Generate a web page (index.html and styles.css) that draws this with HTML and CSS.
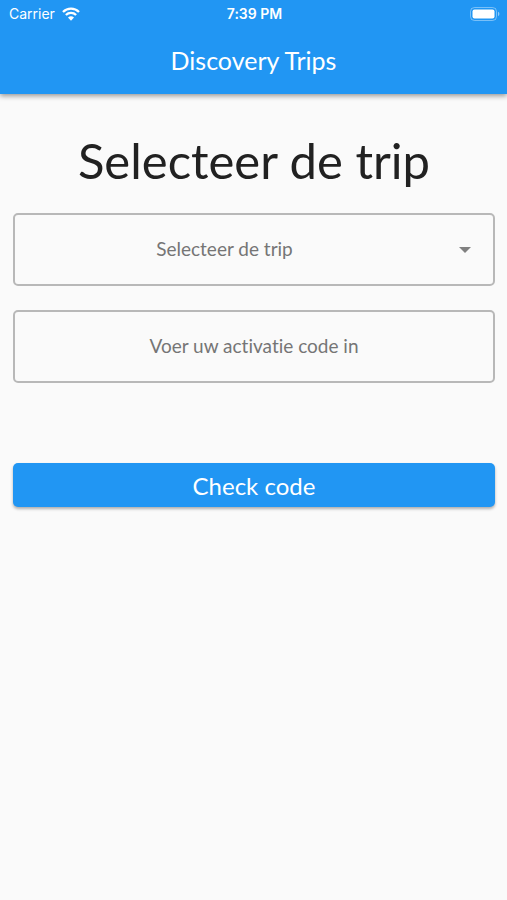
FILE: index.html
```html
<!DOCTYPE html>
<html lang="nl">
<head>
<meta charset="utf-8">
<meta name="viewport" content="width=device-width, initial-scale=1">
<title>Discovery Trips</title>
<link rel="stylesheet" href="styles.css">
</head>
<body>
<header class="app-bar">
  <div class="status">
    <div class="carrier">
      <span>Carrier</span>
      <svg class="wifi" viewBox="0 0 18 14" aria-hidden="true">
        <path d="M1 5a11.3 11.3 0 0 1 16 0M3.9 8a7.2 7.2 0 0 1 10.2 0" fill="none" stroke="currentColor" stroke-width="2.3"/>
        <path d="M9 13.8 6 10.6a4.3 4.3 0 0 1 6 0z" fill="currentColor"/>
      </svg>
    </div>
    <time class="clock">7:39 PM</time>
    <svg class="battery" viewBox="0 0 30 14" aria-hidden="true">
      <rect x="0.5" y="0.5" width="26" height="13" rx="4" fill="none" stroke="currentColor" opacity="0.4"/>
      <rect x="2.5" y="2.5" width="22" height="9" rx="2" fill="currentColor"/>
      <path d="M28 4.8a2.4 2.4 0 0 1 0 4.4z" fill="currentColor" opacity="0.5"/>
    </svg>
  </div>
  <div class="title">Discovery Trips</div>
</header>
<main class="content">
  <h1 class="heading">Selecteer de trip</h1>
  <form class="form">
    <div class="select-wrap">
      <select class="field trip" aria-label="Selecteer de trip">
        <option>Selecteer de trip</option>
      </select>
      <svg class="arrow" viewBox="0 0 12 6" aria-hidden="true"><path d="M0 0h12L6 6z" fill="currentColor"/></svg>
    </div>
    <input class="field" type="text" placeholder="Voer uw activatie code in" aria-label="Voer uw activatie code in">
    <button class="submit" type="button">Check code</button>
  </form>
</main>
</body>
</html>
```
FILE: styles.css
```css
* {
  box-sizing: border-box;
}

body {
  margin: 0;
  min-height: 100vh;
  background: #fafafa;
  color: #212121;
  font-family: Lato, "Liberation Sans", sans-serif;
  font-variant-ligatures: none;
}

.app-bar {
  background: #2196f3;
  color: #fff;
  box-shadow: 0 2px 5px rgba(0, 0, 0, 0.4);
}

.status {
  display: grid;
  grid-template-columns: 1fr auto 1fr;
  align-items: center;
  height: 28px;
  padding: 0 7px 0 9px;
  font-family: Inter, "Liberation Sans", sans-serif;
  font-size: 14px;
}

.carrier {
  display: flex;
  align-items: center;
  gap: 7px;
  line-height: 16px;
}

.wifi {
  width: 18px;
  height: 14px;
}

.clock {
  font-weight: 600;
  line-height: 16px;
}

.battery {
  justify-self: end;
  width: 30px;
  height: 14px;
}

.title {
  height: 66px;
  line-height: 64px;
  font-size: 25px;
  text-align: center;
}

.content {
  padding: 36px 12px 36px 13px;
}

.heading {
  margin: 0 0 23px;
  font-size: 49px;
  font-weight: 400;
  line-height: 60px;
  text-align: center;
}

.form {
  display: flex;
  flex-direction: column;
  gap: 24px;
}

.select-wrap {
  position: relative;
}

.field {
  display: block;
  width: 100%;
  height: 73px;
  padding: 0 16px 2px;
  border: 2px solid #b8b8b8;
  border-radius: 5px;
  background: transparent;
  color: #757575;
  font-family: inherit;
  font-size: 19px;
  font-variant-ligatures: inherit;
  text-align: center;
}

.field::placeholder {
  color: #757575;
  opacity: 1;
}

.trip {
  padding-right: 75px;
  appearance: none;
}

.arrow {
  position: absolute;
  top: 34px;
  right: 24px;
  width: 12px;
  height: 6px;
  color: #808080;
  pointer-events: none;
}

.submit {
  height: 44px;
  margin-top: 56px;
  padding: 0;
  border: 0;
  border-radius: 5px;
  background: #2196f3;
  box-shadow: 0 2px 3px rgba(0, 0, 0, 0.3);
  color: #fff;
  font-family: inherit;
  font-size: 24px;
}
```
